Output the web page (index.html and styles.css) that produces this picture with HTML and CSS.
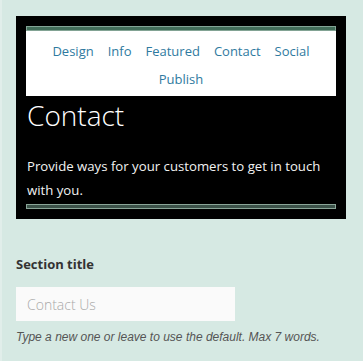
FILE: index.html
```html
<!DOCTYPE html>
<html lang="en">
<head>
    <meta charset="UTF-8">
    <meta name="viewport" content="width=device-width, initial-scale=1.0">
    <title>Contact section</title>
    <link rel="stylesheet" href="styles.css">
</head>
<body>
    <div class="preview">
        <div class="bar"></div>
        <nav class="nav">
            <a href="#">Design</a>
            <a href="#">Info</a>
            <a href="#">Featured</a>
            <a href="#">Contact</a>
            <a href="#">Social</a>
            <a href="#">Publish</a>
        </nav>
        <h1>Contact</h1>
        <p class="intro">Provide ways for your customers to get in touch with you.</p>
        <div class="bar bar-bottom"></div>
    </div>

    <div class="field">
        <label for="sectionTitle">Section title</label>
        <input type="text" id="sectionTitle" placeholder="Contact Us">
        <p class="hint">Type a new one or leave to use the default. Max 7 words.</p>
    </div>
</body>
</html>
```

FILE: styles.css
```css
* {
    margin: 0;
    padding: 0;
    box-sizing: border-box;
}

body {
    font-family: 'Open Sans', 'Noto Sans', sans-serif;
    background: #d6e9e3;
    border-left: 2px solid #e1eeea;
    min-height: 100vh;
    padding: 16px 17px 16px 14px;
}

.preview {
    background: #000;
    padding: 10px;
}

.bar {
    height: 5px;
    border: 1px solid #82a394;
    background: #426d59;
}

.bar-bottom {
    border-color: #8aa598;
    background: #3c5249;
}

.nav {
    background: #fff;
    display: flex;
    flex-wrap: wrap;
    justify-content: center;
    column-gap: 14px;
    padding: 6px 10px 3px;
}

.nav a {
    color: #2f7aa0;
    font-size: 13px;
    line-height: 28px;
    text-decoration: none;
}

h1 {
    color: #fff;
    font-size: 28px;
    font-weight: 300;
    line-height: 38px;
    padding-left: 1px;
}

.intro {
    color: #f2f2f2;
    font-size: 13.2px;
    line-height: 24px;
    margin: 20px 0 2px 1px;
}

.field {
    margin-top: 36px;
}

.field label {
    display: block;
    color: #333;
    font-size: 13px;
    font-weight: 700;
    line-height: 18px;
}

.field input {
    display: block;
    width: 219px;
    height: 34px;
    margin-top: 14px;
    padding: 0 11px;
    border: none;
    background: #fafafa;
    font-family: 'Open Sans', sans-serif;
    font-size: 14px;
    font-weight: 300;
    color: #333;
}

.field input::placeholder {
    color: #a9a9a9;
}

.hint {
    margin-top: 8px;
    font-family: 'Liberation Sans', Arial, sans-serif;
    font-size: 12px;
    font-style: italic;
    line-height: 16px;
    color: #555;
}
```
